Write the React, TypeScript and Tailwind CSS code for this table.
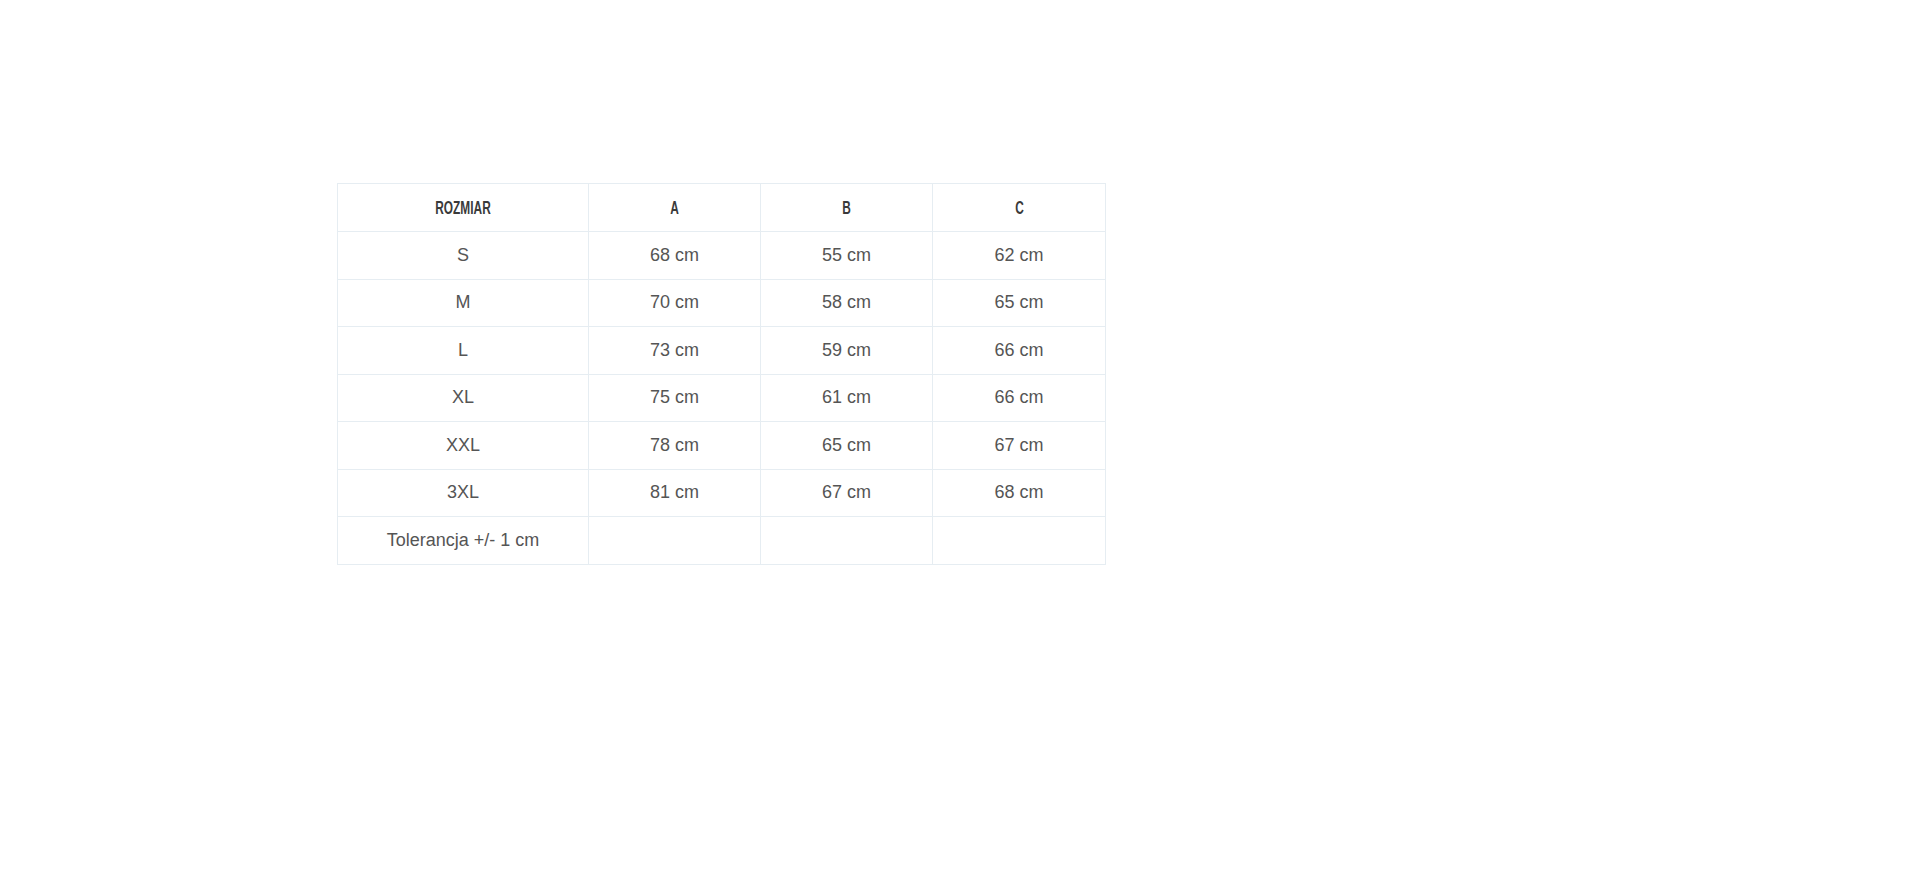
import React from 'react';

const rows = [
  { size: 'S', a: '68 cm', b: '55 cm', c: '62 cm' },
  { size: 'M', a: '70 cm', b: '58 cm', c: '65 cm' },
  { size: 'L', a: '73 cm', b: '59 cm', c: '66 cm' },
  { size: 'XL', a: '75 cm', b: '61 cm', c: '66 cm' },
  { size: 'XXL', a: '78 cm', b: '65 cm', c: '67 cm' },
  { size: '3XL', a: '81 cm', b: '67 cm', c: '68 cm' },
  { size: 'Tolerancja +/- 1 cm', a: '', b: '', c: '' },
];

const head = "border border-[#e6edf2] h-[48px] p-0 text-center align-middle";
const headText = "inline-block scale-x-[0.66] font-bold text-[18px] leading-none text-[#3a3a3a] uppercase font-['Liberation_Sans',Arial,sans-serif]";
const cell = "border border-[#e6edf2] h-[47.5px] p-0 text-center align-middle text-[18px] text-[#555] font-['Liberation_Sans',Arial,sans-serif]";

export default function App() {
  return (
    <div className="min-h-screen bg-white pt-[183px] pl-[337px]">
      <table className="w-[768px] border-collapse table-fixed">
        <colgroup>
          <col className="w-[251px]" />
          <col className="w-[172px]" />
          <col className="w-[172px]" />
          <col className="w-[173px]" />
        </colgroup>
        <thead>
          <tr>
            {['Rozmiar', 'A', 'B', 'C'].map((h) => (
              <th key={h} className={head}>
                <span className={headText}>{h}</span>
              </th>
            ))}
          </tr>
        </thead>
        <tbody>
          {rows.map((r) => (
            <tr key={r.size}>
              <td className={cell}>{r.size}</td>
              <td className={cell}>{r.a}</td>
              <td className={cell}>{r.b}</td>
              <td className={cell}>{r.c}</td>
            </tr>
          ))}
        </tbody>
      </table>
    </div>
  );
}
